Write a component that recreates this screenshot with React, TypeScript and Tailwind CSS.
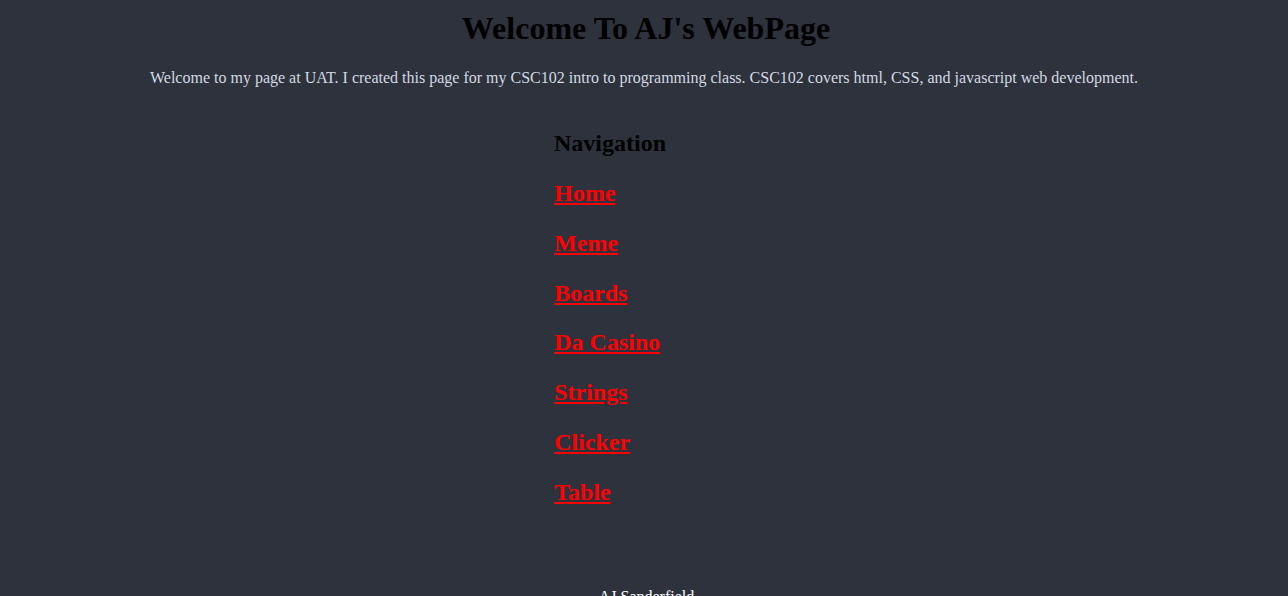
export default function App() {
  const links = ["Home", "Meme", "Boards", "Da Casino", "Strings", "Clicker", "Table"];
  return (
    <div className="min-h-screen bg-[#2e323d] font-['Liberation_Serif',_'Times_New_Roman',_serif] pt-[10px]">
      <h1 className="pl-[4px] text-center text-[32px] leading-[36px] font-bold text-black">Welcome To AJ's WebPage</h1>
      <p className="mt-[23px] text-center text-[16px] leading-[18px] text-[#d4d9e2]">
        Welcome to my page at UAT. I created this page for my CSC102 intro to programming class. CSC102 covers html, CSS, and javascript web development.
      </p>
      <nav className="mx-auto mt-[42px] w-[180px] flex flex-col gap-[22px] text-[24px] leading-[28px] font-bold">
        <h2 className="text-black">Navigation</h2>
        <div className="flex flex-col gap-[21.8px]">
          {links.map((l) => (
            <a key={l} href="#" className="text-[#ff0000] underline">
              {l}
            </a>
          ))}
        </div>
      </nav>
      <footer className="mt-[82px] pl-[5px] text-center text-[16px] leading-[18px] text-white pb-4">AJ Sanderfield</footer>
    </div>
  );
}
